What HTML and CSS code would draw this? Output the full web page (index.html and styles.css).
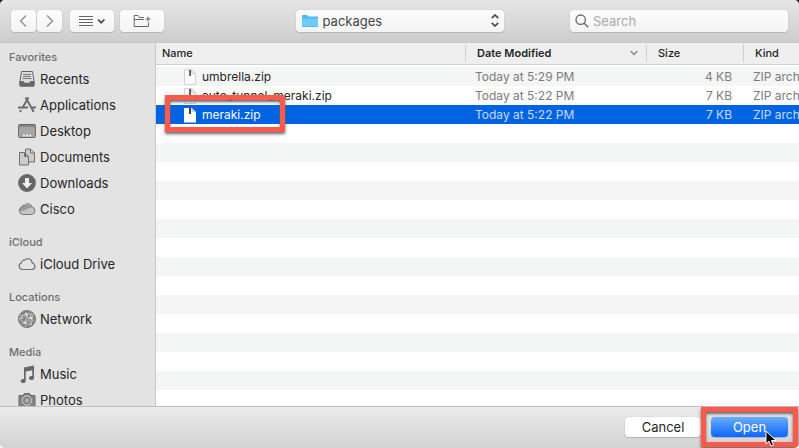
FILE: index.html
```html
<!DOCTYPE html>
<html lang="en">
<head>
<meta charset="utf-8">
<title>Open</title>
<link rel="stylesheet" href="styles.css">
</head>
<body>
<div class="dialog">
  <header class="toolbar">
    <div class="tools">
      <div class="nav">
        <button class="btn nav-btn" type="button" aria-label="Back"><svg width="9" height="14" viewBox="0 0 9 14"><path class="chev" d="M7 1.500 1.500 7 7 12.500"/></svg></button>
        <button class="btn nav-btn" type="button" aria-label="Forward"><svg width="9" height="14" viewBox="0 0 9 14"><path class="chev" d="M2 1.500 7.500 7 2 12.500"/></svg></button>
      </div>
      <button class="btn tool-btn" type="button" aria-label="View"><svg width="27" height="12" viewBox="0 0 27 12"><path class="line" d="M0 1.500h14M0 4.500h14M0 7.500h14M0 10.500h14"/><path class="bold" d="m19 4.500 3.200 3.200 3.200-3.200"/></svg></button>
      <button class="btn tool-btn" type="button" aria-label="New Folder"><svg width="18" height="14" viewBox="0 0 18 14"><path class="line" d="M11 3.500H6.500L5 1.500H1.200V12.500H15.500V8.500M1.200 5.500H11M15 2.500v5M12.500 5h5"/></svg></button>
    </div>
    <div class="location">
      <svg class="folder" width="16" height="14" viewBox="0 0 16 14"><path fill="#52b7ea" d="M0 2a1 1 0 0 1 1-1h4l1.500 1.500H15a1 1 0 0 1 1 1V12a1 1 0 0 1-1 1H1a1 1 0 0 1-1-1z"/><path fill="#6dccfa" d="M0 4.500h16V12H0z"/></svg>
      <select class="location-select" aria-label="Location"><option>packages</option></select>
      <svg class="updown" width="8" height="13" viewBox="0 0 8 13"><path class="bold" d="M.8 4.200 4 1l3.200 3.200M.8 8.800 4 12l3.200-3.200"/></svg>
    </div>
    <div class="search">
      <svg width="14" height="14" viewBox="0 0 14 14"><circle class="glass" cx="5.700" cy="5.700" r="4.700"/><path class="glass" d="m9.200 9.200 4 4"/></svg>
      <input class="search-input" type="search" placeholder="Search" aria-label="Search">
    </div>
  </header>

  <div class="body">
    <nav class="sidebar" aria-label="Places">
      <h2>Favorites</h2>
      <ul>
        <li><a href="#"><svg width="18" height="18" viewBox="0 0 18 18"><path fill="#ddd" stroke="#666" d="M3.500 1.500h11l1.500 9v5H2v-5z"/><path stroke="#777" d="M5 4.500h8M5 6.500h8M4.500 8.500h9"/><path fill="#666" d="M1.500 11h4l1 1.800h5l1-1.800h4v4.500a1.300 1.300 0 0 1-1.300 1.300H2.800a1.300 1.300 0 0 1-1.300-1.300z"/></svg>Recents</a></li>
        <li><a href="#"><svg width="18" height="18" viewBox="0 0 18 18"><path fill="none" stroke="#6c6c6c" stroke-width="2" d="M7.500 1.500 14.700 14l.8 2M10.500 1.500 4 12.500M0 11.500h10M13 11.500h5M3 14l-1 2"/></svg>Applications</a></li>
        <li><a href="#"><svg width="18" height="18" viewBox="0 0 18 18"><rect x=".6" y="2.500" width="16.800" height="13" rx="1" fill="#a6a6a6" stroke="#666"/><path stroke="#666" d="M1 4h16"/><path stroke="#eee" stroke-width="2" stroke-dasharray="2 1" d="M5 13.500h8"/></svg>Desktop</a></li>
        <li><a href="#"><svg width="18" height="18" viewBox="0 0 18 18"><path fill="#ccc" stroke="#707070" d="M7.500 1h5l4 4v9h-9zM12.500 1v4h4"/><path fill="#ccc" stroke="#707070" d="M1.500 4.500h5l4 4v8.500h-9zM6.500 4.500v4h4"/></svg>Documents</a></li>
        <li><a href="#"><svg width="18" height="18" viewBox="0 0 18 18"><circle cx="9" cy="9" r="8.900" fill="#666"/><path fill="#eee" d="M7 4h4v5h3l-5 5.500L4 9h3z"/></svg>Downloads</a></li>
        <li><a href="#"><svg width="18" height="18" viewBox="0 0 18 18"><path fill="#c4c4c4" d="M4.500 14.500a3.800 3.800 0 0 1-.8-7.300 2.500 2.500 0 0 1 3-2A4 4 0 0 1 13.800 7a3.800 3.800 0 0 1 0 7.500z"/><path fill="#9a9a9a" d="M1 11.500C4 10.500 7 11 10 8.500c2-1 3-1 4-1C12 4 7 4 6 6 4 5 1 8 1 11.500z"/><path fill="none" stroke="#777" d="M4.500 14.500a3.800 3.800 0 0 1-.8-7.300 2.500 2.500 0 0 1 3-2A4 4 0 0 1 13.800 7a3.800 3.800 0 0 1 0 7.500z"/></svg>Cisco</a></li>
      </ul>
      <h2>iCloud</h2>
      <ul>
        <li><a href="#"><svg width="18" height="18" viewBox="0 0 18 18"><path fill="none" stroke="#707070" stroke-width="1.200" d="M4.500 14.500a3.500 3.500 0 0 1-1-6.800 2.500 2.500 0 0 1 3.200-2.500A4.300 4.300 0 0 1 14.200 8a3.300 3.300 0 0 1 0 6.500z"/></svg>iCloud Drive</a></li>
      </ul>
      <h2>Locations</h2>
      <ul>
        <li><a href="#"><svg width="18" height="18" viewBox="0 0 18 18"><circle cx="9" cy="9" r="8.500" fill="#858585" stroke="#757575"/><path fill="none" stroke="#ccc" stroke-width=".8" d="M2 5c5 0 9 2 14 6M12 1c-4 4-5 9-4 16M3 14C8 13 12 9 14 3M1 9l7-5 7 1-2 10-6-2zM8 4l5 11"/><g fill="#e4e4e4"><circle cx="8" cy="4" r="1.200"/><circle cx="13" cy="8" r="1.300"/><circle cx="7" cy="12.500" r="1.300"/><circle cx="3.500" cy="8" r="1"/></g></svg>Network</a></li>
      </ul>
      <h2>Media</h2>
      <ul>
        <li><a href="#"><svg width="18" height="18" viewBox="0 0 18 18"><path fill="#666" d="M6 2.500 16 .5V13a2.500 2 0 1 1-1.700-1.900V5.300L7.700 6.600V16A2.500 2 0 1 1 6 14.100z"/></svg>Music</a></li>
        <li><a href="#"><svg width="18" height="18" viewBox="0 0 18 18"><path fill="#858585" stroke="#666" d="M1 4.500h4L6.500 2.500h5L13 4.500h4V16H1z"/><circle cx="9" cy="9.500" r="4.500" fill="#777" stroke="#ddd"/><circle cx="9" cy="9.500" r="2.500" fill="#aaa"/></svg>Photos</a></li>
      </ul>
    </nav>

    <main class="files">
      <table>
        <colgroup><col><col class="col-date"><col class="col-size"><col class="col-kind"></colgroup>
        <thead>
          <tr>
            <th scope="col"><span>Name</span></th>
            <th scope="col" class="sorted" aria-sort="descending"><span>Date Modified<svg width="8" height="6" viewBox="0 0 8 6"><path d="m.7 1 3.300 3.500L7.300 1"/></svg></span></th>
            <th scope="col"><span>Size</span></th>
            <th scope="col"><span>Kind</span></th>
          </tr>
        </thead>
        <tbody>
          <tr>
            <td><div class="file"><svg width="12" height="16" viewBox="0 0 12 16"><path fill="#fcfcfc" stroke="#d2d2d2" d="M.5.500h7l4 4v11H.5z"/><path fill="#e8e8e8" stroke="#d2d2d2" d="M7.500.500v4h4z"/><path stroke="#666" stroke-width="2" d="M6 1v6"/></svg>umbrella.zip</div></td>
            <td>Today at 5:29 PM</td><td class="size">4 KB</td><td>ZIP arch</td>
          </tr>
          <tr>
            <td><div class="file"><svg width="12" height="16" viewBox="0 0 12 16"><path fill="#fcfcfc" stroke="#d2d2d2" d="M.5.500h7l4 4v11H.5z"/><path fill="#e8e8e8" stroke="#d2d2d2" d="M7.500.500v4h4z"/><path stroke="#666" stroke-width="2" d="M6 1v6"/></svg>auto_tunnel_meraki.zip</div></td>
            <td>Today at 5:22 PM</td><td class="size">7 KB</td><td>ZIP arch</td>
          </tr>
          <tr class="selected" aria-selected="true">
            <td><div class="file"><svg width="12" height="16" viewBox="0 0 12 16"><path fill="#fff" d="M0 1h7.500L12 5v10.500H0z"/><path fill="#ccc" d="M7.500 1v4H12z"/><path stroke="#444" stroke-width="2" d="M6 1v6"/></svg>meraki.zip<i class="mark mark-file"></i></div></td>
            <td>Today at 5:22 PM</td><td class="size">7 KB</td><td>ZIP arch</td>
          </tr>
        </tbody>
      </table>
      <div class="empty-rows"></div>
    </main>
  </div>

  <footer class="actions">
    <button class="action" type="button">Cancel</button>
    <div class="open-wrap">
      <button class="action primary" type="button">Open</button>
      <i class="mark mark-open"></i>
      <svg class="cursor" width="12" height="18" viewBox="0 0 12 18"><path fill="#000" stroke="#fff" d="M1 1v13l3-2.800L6 16l2.500-1-2-4.500H11z"/></svg>
    </div>
  </footer>
</div>
</body>
</html>
```
FILE: styles.css
```css
* {
  box-sizing: border-box;
}

body {
  margin: 0;
  background: linear-gradient(#222 50%, #f4f4f4 50%);
  color: #262626;
  font: 13px/18px Inter, "Liberation Sans", sans-serif;
}

button,
input,
select {
  font: inherit;
}

svg {
  display: block;
  flex: none;
}

.dialog {
  display: flex;
  flex-direction: column;
  height: 100vh;
  overflow: hidden;
  border-radius: 5px;
  background: #ececec;
}

/* Toolbar */
.toolbar {
  display: grid;
  grid-template-columns: 1fr 208px 1fr;
  align-items: center;
  flex: none;
  height: 43px;
  padding: 0 11px;
  border-bottom: 1px solid #c9c9c9;
  background: linear-gradient(#e6e6e6, #cdcdcd);
}

.tools {
  display: flex;
  gap: 6px;
}

.nav {
  display: flex;
  gap: 1px;
  margin-right: 2px;
}

.btn,
.location,
.search {
  border: 0;
  border-radius: 4px;
  background: linear-gradient(#fdfdfd, #f4f4f4);
  box-shadow: 0 0 1px #aaa, 0 1px 1px #b8b8b8;
}

.btn {
  display: flex;
  align-items: center;
  justify-content: center;
  height: 22px;
  padding: 0;
}

.nav-btn {
  width: 25px;
}

.tool-btn {
  width: 44px;
}

.chev,
.line,
.bold,
.glass {
  fill: none;
  stroke: #666;
}

.chev {
  stroke: #929292;
  stroke-width: 1.4;
}

.bold {
  stroke: #4a4a4a;
  stroke-width: 1.7;
}

.glass {
  stroke-width: 1.3;
}

.location {
  position: relative;
  height: 22px;
}

.folder,
.updown {
  position: absolute;
  top: 4px;
  pointer-events: none;
}

.folder {
  left: 6px;
}

.updown {
  right: 5px;
}

.location-select {
  display: block;
  width: 100%;
  height: 22px;
  padding: 0 20px 0 27px;
  appearance: none;
  border: 0;
  background: none;
  color: #454545;
}

.search {
  display: flex;
  align-items: center;
  justify-self: end;
  gap: 4px;
  width: 218px;
  height: 22px;
  padding: 0 5px;
}

.search-input {
  flex: 1;
  min-width: 0;
  padding: 0;
  border: 0;
  outline: 0;
  background: none;
}

.search-input::placeholder {
  color: #a9a9a9;
}

/* Middle */
.body {
  display: flex;
  flex: 1;
  min-height: 0;
}

.sidebar {
  flex: none;
  width: 156px;
  padding-top: 5px;
  overflow: hidden;
  border-right: 1px solid #c8c8c8;
  background: #e3e3e3;
}

.sidebar h2 {
  margin: 11px 0 0;
  padding-left: 9px;
  color: #6e6e6e;
  font-size: 11px;
  font-weight: 500;
  line-height: 18px;
}

.sidebar h2:first-child {
  margin-top: 0;
}

.sidebar ul {
  margin: 0;
  padding: 0;
  list-style: none;
}

.sidebar a {
  display: flex;
  align-items: center;
  gap: 4px;
  height: 26px;
  padding-left: 18px;
  color: #262626;
  text-decoration: none;
}

.sidebar svg {
  fill: none;
}

.files {
  display: flex;
  flex: 1;
  flex-direction: column;
  min-width: 0;
  overflow: hidden;
  background: #fff;
}

table {
  width: 100%;
  table-layout: fixed;
  border-collapse: separate;
  border-spacing: 0;
}

.col-date {
  width: 181px;
}

.col-size {
  width: 97px;
}

.col-kind {
  width: 56px;
}

th {
  height: 22px;
  padding: 1px 0 2px;
  border-bottom: 1px solid #d2d2d2;
  background: #efefef;
  font-size: 11px;
  font-weight: 500;
  text-align: left;
}

th span {
  display: flex;
  align-items: center;
  justify-content: space-between;
  padding: 0 8px 0 11px;
  border-left: 1px solid #d0d0d0;
}

th:first-child span {
  padding-left: 6px;
  border-left: 0;
}

.sorted {
  font-weight: 600;
}

.sorted path {
  fill: none;
  stroke: #858585;
  stroke-width: 1.3;
}

/* Gap between the header and the first row */
tbody::before {
  display: block;
  height: 2px;
  content: "";
}

td {
  height: 19px;
  padding: 0 0 0 10px;
  color: #7c7c7c;
  font-size: 12px;
  white-space: nowrap;
}

tbody tr:nth-child(odd) {
  background: #f4f5f5;
}

td:first-child {
  padding-left: 28px;
  color: #262626;
}

.size {
  padding-right: 11px;
  text-align: right;
}

.file {
  position: relative;
  display: flex;
  align-items: center;
  gap: 6px;
}

tbody tr.selected {
  background: #0063e1;
}

.selected td {
  color: #c6dcfa;
}

.selected td:first-child {
  color: #fff;
}

.empty-rows {
  flex: 1;
  background: repeating-linear-gradient(#fff 0 19px, #f4f5f5 19px 38px);
}

/* Footer */
.actions {
  display: flex;
  flex: none;
  align-items: center;
  justify-content: flex-end;
  gap: 10px;
  height: 42px;
  padding: 0 11px 2px;
  border-top: 1px solid #bdbdbd;
  background: linear-gradient(#ebebeb, #d2d2d2);
}

.action {
  display: block;
  width: 76px;
  height: 20px;
  padding: 0;
  border: 0;
  border-radius: 4px;
  background: #fff;
  box-shadow: 0 0 1px #aaa, 0 1px 1px #b8b8b8;
  color: #262626;
  line-height: 20px;
}

.primary {
  width: 77px;
  background: linear-gradient(#6aaefb, #0a66fb);
  color: #fff;
}

.open-wrap {
  position: relative;
}

/* Callout frames and pointer lying over the dialog */
.mark {
  position: absolute;
  border: 5px solid #fc5a4c;
  box-shadow: 0 2px 3px #666, inset 0 2px 3px #666;
  pointer-events: none;
}

.mark-file {
  top: -11px;
  left: -19px;
  width: 120px;
  height: 37px;
}

.mark-open {
  inset: -10px;
}

.cursor {
  position: absolute;
  top: 13px;
  left: 54px;
}
```
